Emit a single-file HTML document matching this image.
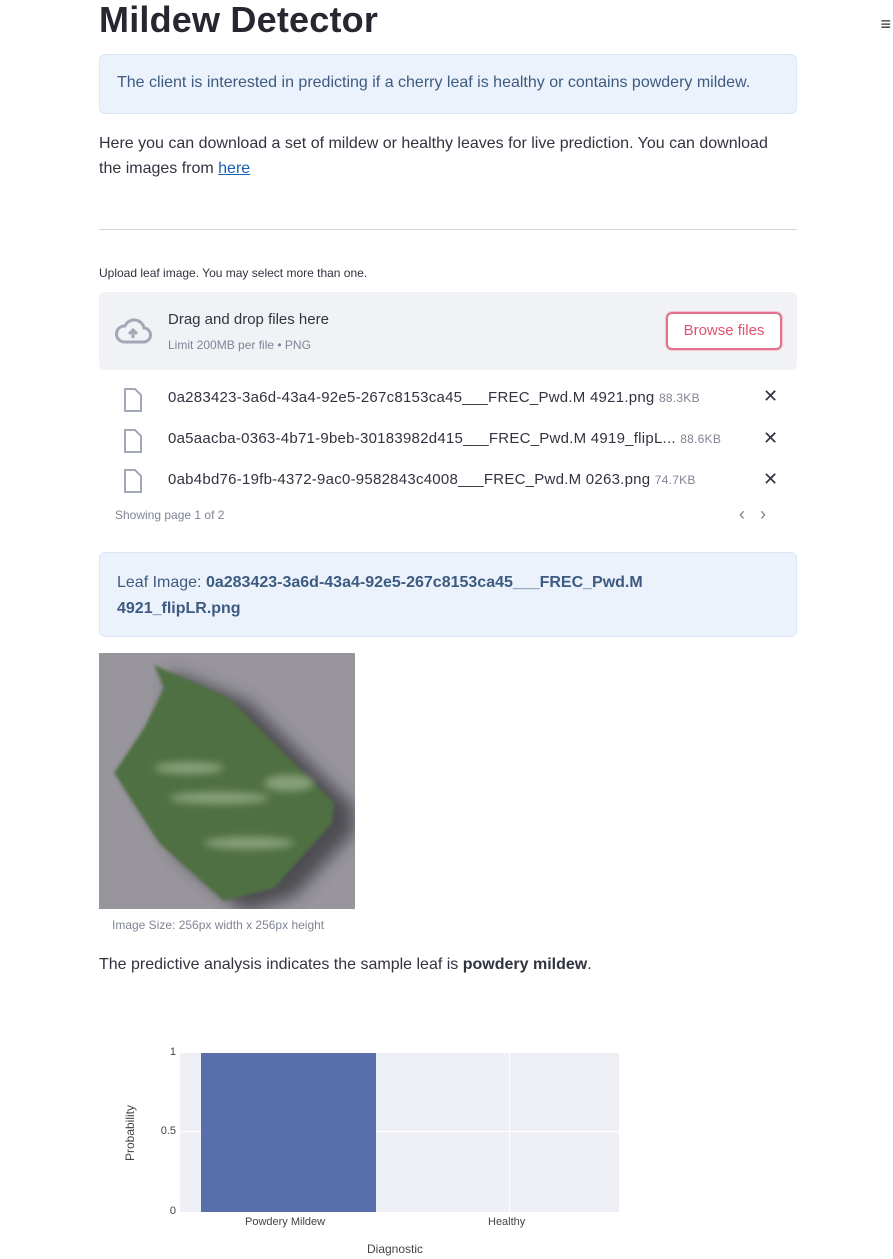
<!DOCTYPE html>
<html><head><meta charset="utf-8"><style>
*{box-sizing:border-box;margin:0;padding:0}
body{width:893px;height:1259px;background:#fff;font-family:"Liberation Sans",sans-serif;color:#31333f;position:relative;overflow:hidden}
.a{position:absolute}
h1{position:absolute;left:99px;top:0px;font-size:36px;font-weight:700;color:#262730;line-height:40px;letter-spacing:0.2px}
.info{left:99px;width:698px;background:#ebf2fc;border:1px solid #dbe6f7;border-radius:6px;color:#3d5a80}
.small{font-size:12px;color:#808495}
</style></head><body>
<h1>Mildew Detector</h1>
<div class="a" style="right:2px;top:14px;font-size:18px;color:#333">&#8801;</div>
<div class="a info" style="top:54px;height:60px;padding:19px 17px;font-size:16px">The client is interested in predicting if a cherry leaf is healthy or contains powdery mildew.</div>
<div class="a" style="left:99px;top:131px;width:698px;font-size:16px;line-height:25px">Here you can download a set of mildew or healthy leaves for live prediction. You can download<br>the images from <a style="color:#1a5fb4;text-decoration:underline">here</a></div>
<div class="a" style="left:99px;top:229px;width:698px;height:1px;background:#d6d6d9"></div>
<div class="a" style="left:99px;top:266px;font-size:12px;color:#31333f">Upload leaf image. You may select more than one.</div>
<div class="a" style="left:99px;top:292px;width:698px;height:78px;background:#f0f2f6;border-radius:6px"></div>
<svg class="a" style="left:114px;top:317px" width="38" height="28" viewBox="0 0 38 28"><path d="M10 25h19a7 7 0 0 0 1-14 10 10 0 0 0-19-2A8 8 0 0 0 10 25z" fill="none" stroke="#a3a8b8" stroke-width="3"/><path d="M19 21v-8m-4 4l4-4 4 4" fill="none" stroke="#a3a8b8" stroke-width="3"/></svg>
<div class="a" style="left:168px;top:311px;font-size:15px">Drag and drop files here</div>
<div class="a small" style="left:168px;top:338px">Limit 200MB per file • PNG</div>
<div class="a" style="left:666px;top:312px;width:116px;height:38px;border:2px solid #e0708c;border-radius:6px;box-shadow:0 0 0 1px #f3c6d1;color:#e0526e;font-size:15px;text-align:center;line-height:34px;background:#fff">Browse files</div>
<svg class="a" style="left:123px;top:387px" width="20" height="26"><path d="M2 2h10l6 6v16H2z" fill="none" stroke="#a3a8b8" stroke-width="2"/></svg>
<svg class="a" style="left:123px;top:428px" width="20" height="26"><path d="M2 2h10l6 6v16H2z" fill="none" stroke="#a3a8b8" stroke-width="2"/></svg>
<svg class="a" style="left:123px;top:468px" width="20" height="26"><path d="M2 2h10l6 6v16H2z" fill="none" stroke="#a3a8b8" stroke-width="2"/></svg>
<div class="a" style="left:168px;top:389px;font-size:15px;letter-spacing:0.25px">0a283423-3a6d-43a4-92e5-267c8153ca45___FREC_Pwd.M 4921.png <span class="small">88.3KB</span></div>
<div class="a" style="left:168px;top:430px;font-size:15px;letter-spacing:0.25px">0a5aacba-0363-4b71-9beb-30183982d415___FREC_Pwd.M 4919_flipL... <span class="small">88.6KB</span></div>
<div class="a" style="left:168px;top:471px;font-size:15px;letter-spacing:0.25px">0ab4bd76-19fb-4372-9ac0-9582843c4008___FREC_Pwd.M 0263.png <span class="small">74.7KB</span></div>
<div class="a" style="left:763px;top:386px;font-size:18px">✕</div>
<div class="a" style="left:763px;top:428px;font-size:18px">✕</div>
<div class="a" style="left:763px;top:469px;font-size:18px">✕</div>
<div class="a small" style="left:115px;top:508px">Showing page 1 of 2</div>
<div class="a" style="left:739px;top:504px;font-size:18px;color:#808495">‹ &nbsp; ›</div>
<div class="a info" style="top:552px;height:85px;padding:17px 17px;font-size:16px;line-height:26px">Leaf Image: <b>0a283423-3a6d-43a4-92e5-267c8153ca45___FREC_Pwd.M<br>4921_flipLR.png</b></div>
<svg class="a" style="left:99px;top:653px" width="256" height="256" viewBox="0 0 256 256">
<defs><filter id="b"><feGaussianBlur stdDeviation="8"/></filter><filter id="c"><feGaussianBlur stdDeviation="1.5"/></filter><filter id="d"><feGaussianBlur stdDeviation="4"/></filter></defs>
<rect width="256" height="256" fill="#98959c"/>
<path d="M62 14 L140 45 L205 110 L245 150 L245 175 L185 240 L135 255 L70 200 L25 125 L55 80 Z" fill="#3a3a40" opacity=".8" filter="url(#b)" transform="translate(10,4)"/>
<path d="M55 12 L130 45 L195 110 L235 150 L233 170 L175 235 L125 248 L60 190 L15 120 L45 75 L65 35 Z" fill="#4f7043" filter="url(#c)"/>
<g filter="url(#d)" opacity=".55" fill="#b7c9aa"><ellipse cx="90" cy="115" rx="35" ry="6"/><ellipse cx="120" cy="145" rx="50" ry="6"/><ellipse cx="150" cy="190" rx="45" ry="6"/><ellipse cx="190" cy="130" rx="25" ry="8"/></g>
</svg>
<div class="a small" style="left:112px;top:918px">Image Size: 256px width x 256px height</div>
<div class="a" style="left:99px;top:956px;font-size:16px">The predictive analysis indicates the sample leaf is <b>powdery mildew</b>.</div>
<div class="a" style="left:180px;top:1053px;width:439px;height:159px;background:#eef0f5"></div>
<div class="a" style="left:180px;top:1131px;width:439px;height:1px;background:#fff"></div>
<div class="a" style="left:509px;top:1053px;width:1px;height:159px;background:#fff"></div>
<div class="a" style="left:201px;top:1053px;width:175px;height:159px;background:#596fab"></div>
<div class="a" style="left:120px;top:1046px;width:56px;text-align:right;font-size:11px;color:#444">1</div>
<div class="a" style="left:120px;top:1125px;width:56px;text-align:right;font-size:11px;color:#444">0.5</div>
<div class="a" style="left:120px;top:1205px;width:56px;text-align:right;font-size:11px;color:#444">0</div>
<div class="a" style="left:245px;top:1216px;font-size:11px;color:#444">Powdery Mildew</div>
<div class="a" style="left:488px;top:1216px;font-size:11px;color:#444">Healthy</div>
<div class="a" style="left:367px;top:1242px;font-size:12px;color:#444">Diagnostic</div>
<div class="a" style="left:102px;top:1126px;font-size:12px;color:#444;transform:rotate(-90deg);transform-origin:center">Probability</div>
</body></html>
